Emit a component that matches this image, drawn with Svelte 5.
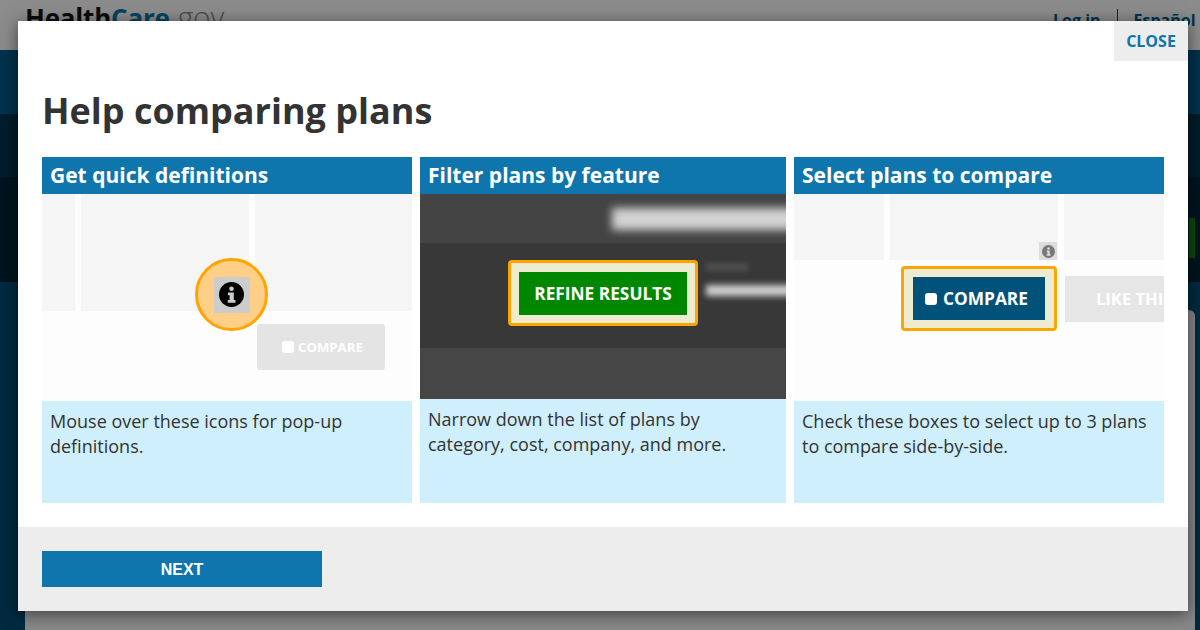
<script>
  const cols = [
    { title: 'Get quick definitions', text: 'Mouse over these icons for pop-up definitions.', kind: 'defs' },
    { title: 'Filter plans by feature', text: 'Narrow down the list of plans by category, cost, company, and more.', kind: 'filter' },
    { title: 'Select plans to compare', text: 'Check these boxes to select up to 3 plans to compare side-by-side.', kind: 'select' }
  ];
</script>

{#snippet info(size, color, hole)}
  <svg width={size} height={size} viewBox="0 0 24 24" aria-hidden="true">
    <circle cx="12" cy="12" r="12" fill={color} />
    <circle cx="12" cy="6.4" r="2.2" fill={hole} />
    <path d="M8.6 10h5.6v7.2h1.6V20H8.4v-2.8h1.8v-4.4H8.6z" fill={hole} />
  </svg>
{/snippet}

<div class="page">
  <header class="site">
    <div class="logo"><span class="l1">Health</span><span class="l2">Care</span><span class="l3">.gov</span></div>
    <nav class="sitenav"><span>Log in</span><i></i><span>Español</span></nav>
  </header>
  <div class="hero">
    <div class="band b1"></div>
    <div class="band b2"><span class="sitegreen"></span></div>
    <div class="band b3"></div>
  </div>
  <div class="results">
    <div class="sheet"></div>
  </div>
</div>

<div class="modal">
  <button class="close">CLOSE</button>
  <div class="body">
    <h1>Help comparing plans</h1>
    <div class="cols">
      {#each cols as c}
        <section class="col {c.kind}">
          <h2>{c.title}</h2>
          <div class="shot">
            {#if c.kind === 'defs'}
              <div class="cards"><div style="width:33px"></div><div style="width:168px"></div><div style="width:157px"></div></div>
              <div class="ghost">
                <span class="check small"></span>COMPARE
              </div>
              <div class="spot"><div class="tile">{@render info(25, '#000', '#ccc')}</div></div>
            {:else if c.kind === 'filter'}
              <div class="dark d1"></div>
              <div class="dark d2"></div>
              <div class="dark d3"></div>
              <div class="blur pill"></div>
              <div class="blur lab"></div>
              <div class="blur sel"></div>
              <div class="mark refine"><div class="btn green">REFINE RESULTS</div></div>
            {:else}
              <div class="cards"><div style="width:90px"></div><div style="width:168px"></div><div style="width:100px"></div></div>
              <div class="tinyinfo">{@render info(13, '#777', '#ddd')}</div>
              <div class="mark cmp"><div class="btn navy"><span class="check"></span>COMPARE</div></div>
              <div class="like">LIKE THI</div>
            {/if}
          </div>
          <p>{c.text}</p>
        </section>
      {/each}
    </div>
  </div>
  <footer>
    <button class="next">NEXT</button>
  </footer>
</div>

<style>
  :global(body) { margin: 0; background: #002a40; overflow: hidden; }
  .page { width: 1200px; height: 630px; overflow: hidden; display: flex; flex-direction: column; font-family: "Open Sans", sans-serif; }
  .site { height: 50px; flex: none; background: #8c8c8c; display: flex; justify-content: space-between; padding: 0 0 0 25px; box-sizing: border-box; }
  .logo { font-family: "Open Sans", sans-serif; font-size: 26px; line-height: 37px; letter-spacing: -0.2px; }
  .l1 { color: #0b0b0b; font-weight: 700; }
  .l2 { color: #00445f; font-weight: 700; }
  .l3 { color: #4c4c4c; font-weight: 300; font-size: 30px; line-height: 30px; margin-left: 1px; }
  .sitenav { display: flex; align-items: flex-start; color: #00344d; font-weight: 700; font-size: 16px; line-height: 41px; width: 147px; flex: none; white-space: nowrap; }
  .sitenav i { width: 1px; height: 12px; background: #222; margin: 9px 16px 0 16px; }
  .hero { height: 232px; flex: none; display: flex; flex-direction: column; }
  .band { flex: none; }
  .b1 { height: 64px; background: #00324d; }
  .b2 { height: 63px; background: #001c2b; position: relative; }
  .b3 { height: 105px; background: #00141f; }
  .sitegreen { position: absolute; left: 1189px; top: 104px; width: 6px; height: 40px; background: #0a490c; }
  .results { flex: 1; background: #002a40; padding: 28px 5px 0 25px; }
  .sheet { height: 330px; background: #888; border-radius: 6px 6px 0 0; }

  .modal { position: absolute; left: 18px; top: 21px; width: 1170px; height: 590px; background: #fff; display: flex; flex-direction: column; box-shadow: 0 3px 16px rgba(0, 0, 0, 0.55); font-family: "Open Sans", sans-serif; }
  .close { position: absolute; right: 0; top: 0; width: 74px; height: 40px; border: 0; background: #ededed; color: #0e75ad; font: 700 16px "Open Sans", sans-serif; padding: 0; }
  .body { flex: 1; padding: 66px 24px 0; }
  h1 { margin: 0; font-size: 36px; line-height: 48px; font-weight: 700; color: #333; }
  .cols { display: grid; grid-template-columns: 370px 366px 370px; gap: 8px; margin-top: 22px; }
  .col { display: flex; flex-direction: column; height: 346px; }
  h2 { margin: 0; height: 37px; flex: none; background: #0e75ad; color: #fff; font-size: 21px; font-weight: 700; line-height: 37px; padding-left: 8px; }
  .shot { position: relative; height: 207px; flex: none; overflow: hidden; background: #fdfdfd; }
  .filter .shot { height: 205px; background: #444; }
  p { margin: 0; flex: 1; background: #d0effc; color: #333; font-size: 18px; line-height: 25px; padding: 8px 8px 0; }
  .cards { display: flex; gap: 6px; height: 117px; }
  .cards div { background: #f5f5f5; flex: none; }
  .select .cards { height: 66px; }

  .spot { position: absolute; left: 153px; top: 64px; width: 73px; height: 73px; box-sizing: border-box; border: 3px solid #ffa400; border-radius: 50%; background: #ffcf87; display: flex; align-items: center; justify-content: center; }
  .tile { width: 36px; height: 36px; background: #ccc; display: flex; align-items: center; justify-content: center; }
  .tile svg { display: block; }
  .ghost { position: absolute; left: 215px; top: 130px; width: 128px; height: 46px; box-sizing: border-box; padding-left: 25px; background: #e4e4e4; border-radius: 3px; color: #fff; font-size: 13.2px; font-weight: 700; display: flex; align-items: center; gap: 4px; }
  .check { width: 12px; height: 12px; background: #fff; border-radius: 3px; flex: none; }

  .dark { position: absolute; left: 0; right: 0; }
  .d1 { top: 0; height: 49px; background: #444; }
  .d2 { top: 49px; height: 105px; background: #383838; }
  .d3 { top: 154px; height: 51px; background: #464646; }
  .blur { position: absolute; background: #d2d2d2; filter: blur(4px); }
  .pill { left: 192px; top: 14px; width: 200px; height: 22px; }
  .lab { left: 286px; top: 69px; width: 42px; height: 8px; background: #4e4e4e; filter: blur(2.5px); }
  .sel { left: 286px; top: 91px; width: 100px; height: 11px; filter: blur(3px); }
  .mark { position: absolute; box-sizing: border-box; border: 3px solid #ffa400; border-radius: 4px; background: #eeecd0; display: flex; align-items: center; justify-content: center; }
  .refine { left: 88px; top: 66px; width: 190px; height: 66px; }
  .cmp { left: 107px; top: 72px; width: 156px; height: 65px; }
  .btn { color: #fff; font-weight: 700; font-size: 17.3px; display: flex; align-items: center; justify-content: center; white-space: nowrap; }
  .green { width: 168px; height: 43px; background: #008700; }
  .navy { width: 132px; height: 43px; box-sizing: border-box; padding-left: 12px; justify-content: flex-start; background: #00527a; gap: 6px; }
  .tinyinfo { position: absolute; left: 245px; top: 48px; width: 18px; height: 18px; background: #ddd; display: flex; align-items: center; justify-content: center; }
  .tinyinfo svg { display: block; }
  .like { position: absolute; left: 271px; top: 82px; width: 99px; height: 46px; box-sizing: border-box; padding-left: 31px; background: #e6e6e6; color: #fff; font-size: 16.6px; font-weight: 700; line-height: 46px; white-space: nowrap; }

  footer { height: 84px; flex: none; background: #ededed; padding: 24px 24px 0; box-sizing: border-box; }
  .next { display: block; width: 280px; height: 36px; border: 0; padding: 1px 0 0; background: #0e75ad; color: #fff; font: 700 16px "Liberation Sans", Arial, sans-serif; }
</style>
